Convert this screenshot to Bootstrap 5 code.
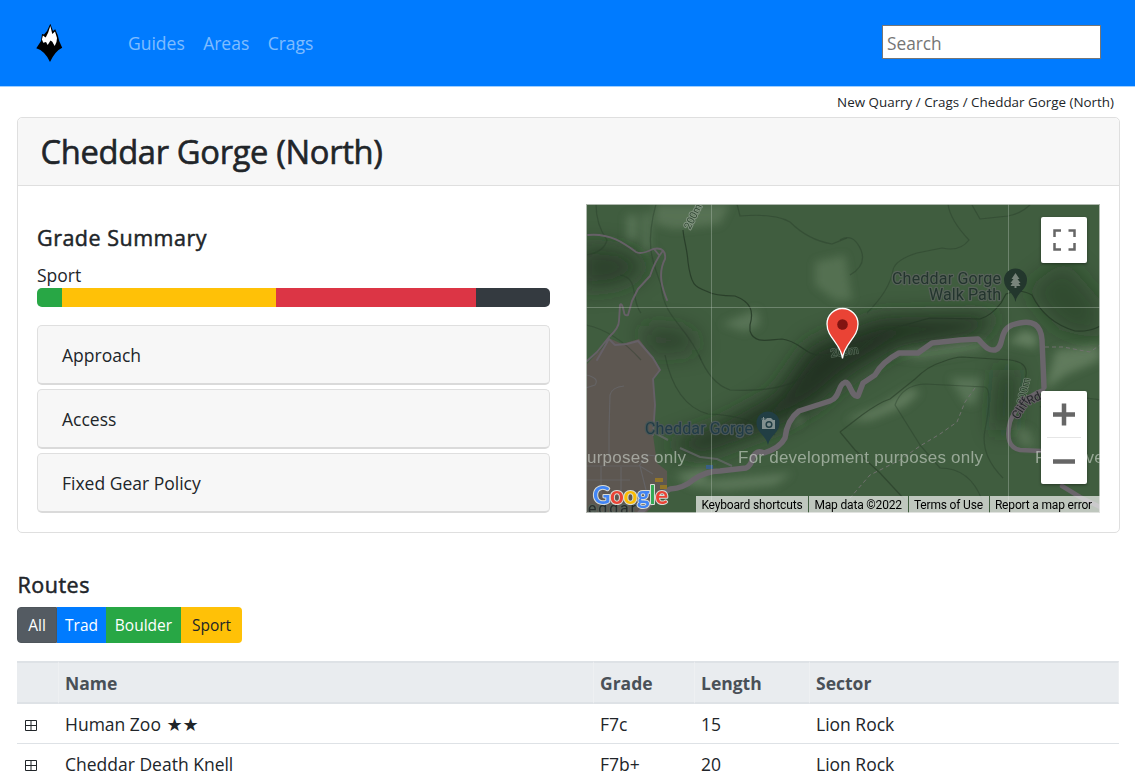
<!DOCTYPE html>
<html lang="en">
<head>
<meta charset="utf-8">
<meta name="viewport" content="width=device-width, initial-scale=1">
<title>Cheddar Gorge (North)</title>
<link href="https://cdn.jsdelivr.net/npm/bootstrap@5.3.0/dist/css/bootstrap.min.css" rel="stylesheet">
<style>
html,body{overflow:hidden}
body{font-family:"Open Sans","Noto Sans",sans-serif;font-size:17.5px;line-height:27.6px;color:#212529;height:780px}
.topbar{background:#007bff;height:87px;border-bottom:1px solid #9fcfff;padding:0 34px 0 35px}
.topbar .nav-link{color:rgba(255,255,255,.5);padding:2px 0 0;font-size:17.5px}
.links{gap:18.400px;margin-left:64px}
.search{width:219px;height:34px;border:1px solid #767676;padding:2px 4px 0;font-size:17.300px;margin-bottom:2px;outline:0}
.search::placeholder{color:#757575}
.crumbs{height:30px;padding:1px 6px 0 0;font-size:13.400px;line-height:29px;color:#212529}
.page{padding:0 15px 0 17px}
.crag{height:416px;border:1px solid #dfdfdf;border-radius:5px;--bs-card-border-width:0}
.crag>.card-header{height:68px;background:#f7f7f7;border-bottom:1px solid #dfdfdf;padding:0 22.500px}
h1{font-size:32.700px;font-weight:400;line-height:68px;letter-spacing:-.330px;-webkit-text-stroke:.6px #212529}
h2{font-size:21.500px;font-weight:400;line-height:28px;letter-spacing:.500px;-webkit-text-stroke:.5px #212529}
.crag>.card-body{padding:18px 19px 0}
.summary{width:513px;padding-top:20px}
.sport-label{line-height:28px;margin-top:9px;height:27px}
.progress{height:19px;border-radius:5px;margin:0 0 18px}
.fold{height:60px;background:#f7f7f7;border:1px solid #dfdfdf;border-bottom:2px solid #dadada;border-radius:5px;padding:0 24px;margin-bottom:4px;line-height:58px}
.map{width:514px;height:309px;overflow:hidden}
.map>svg{display:block}
.ctl{right:13px;width:46px;background:#fff;border-radius:2px;box-shadow:0 1px 3px rgba(0,0,0,.4)}
.ctl svg{display:block}
.legal{right:0;bottom:0;height:17px;gap:1px;font:12px/18px Roboto,sans-serif;letter-spacing:-.170px;color:#000}
.legal span{background:rgba(245,245,245,.7);padding:0 6px 0 5px;white-space:nowrap}
.legal span:last-child{padding-right:8px}
.routes-title{margin:38px 0 0 .500px}
.filters{height:36px;margin:8px 0 18px}
.filters .btn{font-size:15.500px;line-height:35px;padding:0;border-width:1px;height:36px;flex:none}
.btn-group.filters>.btn:not(:first-child){margin-left:0}
.btn-group.filters>.btn:first-child{border-radius:4px 0 0 4px}
.btn-group.filters>.btn:last-child{border-radius:0 4px 4px 0}
.all{background:#545b62;border-color:#4e555b;color:#fff;width:40px}
.trad{background:#007bff;color:#fff;width:49px}
.boulder{background:#28a745;color:#fff;width:75px}
.sport{background:#ffc107;color:#212529;width:61px}
.routes{table-layout:fixed;width:1102px;color:#212529;border-collapse:separate;border-spacing:0}
.routes th{background:#e9ecef;color:#495057;border-top:2px solid #dee2e6;border-bottom:2px solid #dee2e6;border-right:1px solid #eef0f2;height:43px;padding:1px 6px 0;font-weight:700;line-height:38px}
.routes td{height:40px;padding:1px 6px 0;border-bottom:1px solid #dee2e6;line-height:38px;white-space:nowrap}
.routes td svg{display:block;margin:3px 0 0 2px}
.stars{font-family:"DejaVu Sans",sans-serif;font-size:18px;line-height:1;margin-left:1px}
</style>
</head>
<body>
<nav class="topbar d-flex align-items-center">
  <svg width="29" height="41" viewBox="35 22 29 41">
    <path d="M50.300 22.700 53 30l2.200-1.700L57.700 34l1.500 6 3 6.700Q55 50 50 61 45 50 36.300 47.300L41 40l1-7 2 .5 3-3.500z" fill="#000"/>
    <path d="M50.300 25 52.300 33 55 30.500 57 37 56.500 41 54.700 45 52.300 40.700 50.500 39.500 47.700 44 46 41 43.300 41.700 41.900 38.500 42.900 34.500 45.700 36.500 48.200 31.500z" fill="#fff"/>
  </svg>
  <div class="links d-flex"><a class="nav-link" href="#">Guides</a><a class="nav-link" href="#">Areas</a><a class="nav-link" href="#">Crags</a></div>
  <input class="search ms-auto" placeholder="Search" aria-label="Search">
</nav>
<main class="page">
  <div class="crumbs text-end">New Quarry / Crags / Cheddar Gorge (North)</div>
  <section class="card crag">
    <div class="card-header"><h1 class="m-0">Cheddar Gorge (North)</h1></div>
    <div class="card-body d-flex justify-content-between">
      <div class="summary">
        <h2 class="m-0">Grade Summary</h2>
        <div class="sport-label">Sport</div>
        <div class="progress">
          <div class="progress-bar" style="width:4.900%;background:#28a745"></div>
          <div class="progress-bar" style="width:41.700%;background:#ffc107"></div>
          <div class="progress-bar" style="width:39%;background:#dc3545"></div>
          <div class="progress-bar" style="width:14.400%;background:#343a40"></div>
        </div>
        <div class="fold">Approach</div>
        <div class="fold">Access</div>
        <div class="fold">Fixed Gear Policy</div>
      </div>
      <div class="map position-relative">
        <svg width="514" height="309" viewBox="586 204 514 309" font-family="Roboto,sans-serif">
          <defs>
            <filter id="soft" x="-50%" y="-50%" width="200%" height="200%"><feGaussianBlur stdDeviation="11"/></filter>
            <filter id="hill" x="-50%" y="-50%" width="200%" height="200%"><feGaussianBlur stdDeviation="4.500"/></filter>
          </defs>
          <rect x="586" y="204" width="514" height="309" fill="#405d3f"/>
          <g fill="#1d2e1f" filter="url(#soft)">
            <path d="M580 245 625 250 650 268 620 285 580 290z" opacity=".6"/>
            <path d="M640 325 690 330 700 350 650 355z" opacity=".5"/>
            <path d="M810 345 880 318 1000 315 975 335 900 345 850 375 815 405 780 425 700 455 665 445 720 425 775 395z" opacity=".9"/>
            <path d="M1025 290 1065 260 1100 300 1100 340 1060 330z" opacity=".4"/>
            <path d="M1000 370 1015 370 1010 430 995 430z" opacity=".8"/>
          </g>
          <g fill="#88a081" filter="url(#hill)">
            <path d="M627 215h10v25h-10zM643 213h7v38h-7z" opacity=".35"/>
            <path d="M655 204h75l-10 20-45 5-20-5z" opacity=".32"/>
            <path d="M815 262 845 255 852 300 835 300 815 285z" opacity=".28"/>
            <path d="M722 324 757 309 760 325 745 332z" opacity=".35"/>
            <path d="M892 355 960 342 985 342 982 350 920 359z" opacity=".4"/>
            <path d="M1008 342 1025 330 1038 336 1035 348z" opacity=".5"/>
            <path d="M846 420 880 406 910 388 920 392 905 406 870 420z" opacity=".45"/>
            <path d="M950 378 982 378 975 405 965 403z" opacity=".35"/>
            <path d="M1056 350 1100 345 1100 360 1065 375 1045 390z" opacity=".45"/>
            <path d="M675 475 710 465 705 481 792 473 775 485 725 490 690 486z" opacity=".4"/>
            <path d="M795 413 803 418 795 428z" opacity=".45"/>
            <path d="M1012 425 1020 445 1035 448 1030 430z" opacity=".3"/>
          </g>
          <path d="M587 364 611 339 622 344 639 339 653 358 660 370 653 379 655 405 653 435 657 463 667 471 667 490 646 513H586z" fill="#5d5751"/>
          <g fill="none" stroke="#263a27" stroke-width="1.200" opacity=".85" stroke-linejoin="round">
            <path d="M683 230C684 241 687 248 688 262 691 285 695 287 706 291Q715 296 735 296C751 302 754 311 750 325L750 331C754 344 767 340 782 339 800 341 804 355 820 355L858 352C865 341 888 328 905 325L930 318 980 319Q991 316 1001 303L1006 294Q1020 288 1032 295 1045 322 1075 331 1090 332 1100 326"/>
            <path d="M641 313C630 300 640 278 620 275M656 204C645 245 652 260 661 285 664 320 687 325 701 360" opacity=".45"/>
            <path d="M586 325Q615 331 641 360" opacity=".4"/>
            <path d="M665 355Q675 405 708 414 750 415 775 435" opacity=".5"/>
            <path d="M699 355Q710 383 730 390 790 393 812 370L845 348" opacity=".5"/>
            <path d="M840 432 862 415Q880 402 890 399L915 379Q928 366 942 362 955 357 962 357L1010 360Q1028 362 1026 375L1020 410M840 432 855 450 880 473 905 500" opacity=".7"/>
            <path d="M895 405Q902 385 925 384L985 387Q993 390 985 430 980 455 1003 478M895 405 920 445 940 468Q970 468 982 500M737 204 740 216Q775 213 790 222 808 240 832 244L847 238M948 204Q950 220 969 240 960 252 942 248L917 253Q895 260 893 270 890 290 867 313M972 205 980 219 1008 216Q1020 214 1030 205" opacity=".45"/>
            <path d="M596 204Q596 225 607 240 604 252 587 255M840 240Q853 232 861 250 867 265 850 275M1100 400Q1065 393 1040 407" opacity=".45"/>
          </g>
          <g fill="none" stroke="#69696d" stroke-width="1.200" opacity=".7">
            <path d="M586 466H640L653 474M601 466V495M621 467V500M640 466 646 490M609 460V430L610 395Q612 387 624 386M586 375Q600 378 595 385L586 388M639 466 647 455 656 456M586 480H630"/>
            <path d="M680 448 700 457 717 459 732 466M653 432 668 440" stroke-width="2"/>
          </g>
          <g fill="none" stroke="#666067" stroke-width="1.900" stroke-linecap="round" stroke-linejoin="round">
            <path d="M588 235C610 233 624 243 636 252Q641 255 653 249C663 247 666 252 665 259 657 274 663 290 667 300M654 249 659 255M662 252Q655 261 650 276L638 289 632 301 628 315Q624 316 624 312 622 302 620 305L619 321Q619 328 609 337L597 352 587 361M609 339 597 360M609 339 615 345 627 344 638 341 653 358 660 370 653 379 655 405 653 435"/>
          </g>
          <g fill="none" stroke="#6a656b" stroke-width="5.500" stroke-linejoin="round" stroke-linecap="round">
            <path d="M640 513 655 498 670 489Q684 488 693 480 706 471 720 471L746 468Q751 466 753 457 757 449 764 453 780 448 785 438 787 420 799 411L830 401C840 398 838 385 844 383 850 379 851 398 858 396L863 383 875 375Q882 362 899 353L918 353 932 343 960 340 978 339C985 346 988 351 995 350 1005 347 998 331 1012 325 1035 317 1041 327 1042 340L1044 387"/>
            <path d="M1043 390Q1018 400 1010 422 1004 447 1020 450L1042 451M1062 486 1080 497 1100 507" stroke-width="4.500"/>
          </g>
          <path d="M975 388 965 402 957 422 940 434 920 446 900 460 870 475 850 498M1045 347H1063L1090 352 1100 345" fill="none" stroke="#71716f" stroke-dasharray="4 3"/>
          <path d="M655 478h8v4h-8zM660 485h7v4h-7z" fill="#927529"/><path d="M706 465h7v4h-7z" fill="#385f86"/>
          <path d="M711.500 204V513M1008.500 204V513M586 307.500H1100" stroke="#b9c6b8" stroke-opacity=".38" fill="none"/>
          <g stroke="#566158" stroke-width="2.500" paint-order="stroke" stroke-linejoin="round" font-size="16">
            <g fill="#23352e">
              <text x="892" y="284" textLength="109">Cheddar Gorge</text><text x="929" y="300" textLength="72">Walk Path</text>
            </g>
            <text x="645" y="434" textLength="108" fill="#213c47" stroke="#4a5756">Cheddar Gorge</text>
            <text x="588" y="514" font-size="16" fill="#292d2d" textLength="48">eddar</text>
            <text transform="translate(690 230) rotate(-63)" font-size="10.500" fill="#344b36" stroke="#849683" stroke-width="2">200m</text>
            <text transform="translate(831 357) rotate(-8)" font-size="11" fill="#253a28" stroke="#526453" stroke-width="1.500">200m</text>
            <text transform="translate(1024 405) rotate(-77)" font-size="10.500" fill="#2c422f" stroke="#718371" stroke-width="1.500">200m</text>
            <text transform="translate(1018 420) rotate(-57)" font-size="12" fill="#222628" stroke="#655f65" stroke-width="2">Cliff</text>
            <text transform="translate(1029 405) rotate(-25)" font-size="12" fill="#222628" stroke="#655f65" stroke-width="2">Rd</text>
          </g>
          <path d="M1015.500 302C1014 292 1004 290 1004 280a11.500 11.500 0 0 1 23 0C1027 290 1017 292 1015.500 302z" fill="#23372d"/>
          <path d="m1015.500 273-4 6h2l-3 4h2l-2 3h4v2h2v-2h4l-2-3h2l-3-4h2z" fill="#78847b"/>
          <path d="M768 445C766 435 756.500 433 756.500 423a11.500 11.500 0 0 1 23 0C779.500 433 770 435 768 445z" fill="#213e44"/>
          <path d="M762 420h3l2-2h4l2 2h2v9h-13z" fill="#81908f"/><circle cx="769" cy="424.500" r="2.800" fill="#81908f" stroke="#213e44" stroke-width="1.500"/><path d="M763.500 417v4M761.500 419h4" stroke="#81908f"/>
          <g font-family="'Liberation Sans',Arial,sans-serif" font-size="17" fill="#d8ded5" fill-opacity=".58">
            <text x="441" y="463" textLength="245">For development purposes only</text><text x="738" y="463" textLength="245">For development purposes only</text><text x="1035" y="463" textLength="245">For development purposes only</text>
          </g>
          <path d="M842.500 358.500C841 343 827 338 827 324a15.500 15.500 0 0 1 31 0C858 338 844 343 842.500 358.500z" fill="#ea4335" stroke="#fff" stroke-width="1.300"/><circle cx="842.500" cy="324.500" r="5.300" fill="#811411"/>
          <text x="593" y="504" textLength="75" font-family="Lato,'Open Sans',sans-serif" font-size="24" font-weight="700" stroke="#d9ddd8" stroke-width="2" paint-order="stroke" stroke-linejoin="round"><tspan fill="#4285f4">G</tspan><tspan fill="#ea4335">o</tspan><tspan fill="#fbbc05">o</tspan><tspan fill="#4285f4">g</tspan><tspan fill="#34a853">l</tspan><tspan fill="#ea4335">e</tspan></text>
          <rect x="586.500" y="204.500" width="513" height="308" fill="none" stroke="#cbd0ca" stroke-opacity=".8"/>
        </svg>
        <div class="ctl position-absolute" style="top:13px;height:46px"><svg width="46" height="46" fill="none" stroke="#666" stroke-width="2.500"><path d="M13.500 20V13.500H20M27.500 13.500H33.500V20M33.500 26V32.500H27.500M20 32.500H13.500V26"/></svg></div>
        <div class="ctl position-absolute" style="top:187px;height:93px"><svg width="46" height="93" fill="none" stroke="#666" stroke-width="4.500"><path d="M12 23.500H34M23 12.500V34.500M12 70.500H34"/><path d="M6 46.500H40" stroke="#e6e6e6" stroke-width="1"/></svg></div>
        <div class="legal position-absolute d-flex"><span>Keyboard shortcuts</span><span>Map data ©2022</span><span>Terms of Use</span><span>Report a map error</span></div>
      </div>
    </div>
  </section>
  <h2 class="routes-title">Routes</h2>
  <div class="btn-group filters"><button class="btn all">All</button><button class="btn trad">Trad</button><button class="btn boulder">Boulder</button><button class="btn sport">Sport</button></div>
  <table class="routes">
    <colgroup><col style="width:42px"><col style="width:535px"><col style="width:101px"><col style="width:115px"><col></colgroup>
    <thead><tr><th></th><th>Name</th><th>Grade</th><th>Length</th><th>Sector</th></tr></thead>
    <tbody>
      <tr><td><svg width="12" height="12" fill="none" stroke="#212529"><path d="M.5.500h11v10H.500zM6 0v11M0 5.500h12"/></svg></td><td>Human Zoo <span class="stars">★★</span></td><td>F7c</td><td>15</td><td>Lion Rock</td></tr>
      <tr><td><svg width="12" height="12" fill="none" stroke="#212529"><path d="M.5.500h11v10H.500zM6 0v11M0 5.500h12"/></svg></td><td>Cheddar Death Knell</td><td>F7b+</td><td>20</td><td>Lion Rock</td></tr>
    </tbody>
  </table>
</main>
<script src="https://cdn.jsdelivr.net/npm/bootstrap@5.3.0/dist/js/bootstrap.bundle.min.js"></script>
</body>
</html>
